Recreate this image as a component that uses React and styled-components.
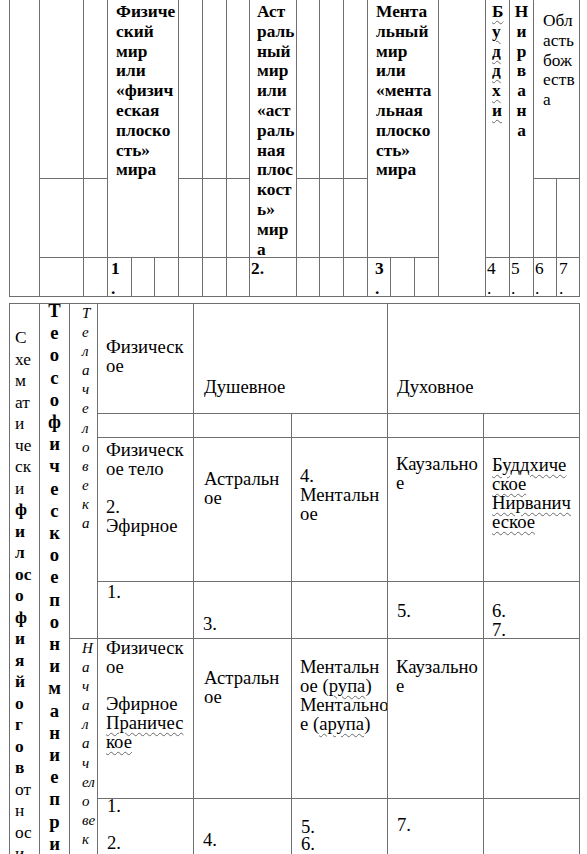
import styled, { createGlobalStyle } from "styled-components";

const GlobalStyle = createGlobalStyle`
  html, body {
    margin: 0;
    padding: 0;
    background: #fff;
  }
  body {
    font-family: "Liberation Serif", "DejaVu Serif", serif;
    color: #000;
  }
`;

const Page = styled.div`
  width: 587px;
  height: 854px;
  overflow: hidden;
  padding-left: 9px;
  box-sizing: border-box;
  font-family: "Liberation Serif", "DejaVu Serif", serif;
`;

const Grid = styled.div`
  display: grid;
  grid-template-columns: ${(p) => p.$cols};
  grid-template-rows: ${(p) => p.$rows};
  gap: 1px;
  padding: ${(p) => p.$pad};
  margin-top: ${(p) => p.$mt || 0}px;
  width: max-content;
  background: #6f6f6f;
`;

const Cell = styled.div`
  grid-column: ${(p) => p.$c};
  grid-row: ${(p) => p.$r};
  background: #fff;
  box-sizing: border-box;
  overflow: hidden;
  white-space: nowrap;
  padding: ${(p) => p.$pt || 0}px 0 0 ${(p) => (p.$pl === undefined ? 8 : p.$pl)}px;
  font-family: "Liberation Serif", "DejaVu Serif", serif;
  font-size: ${(p) => p.$fs || 18.67}px;
  line-height: ${(p) => p.$lh || 19}px;
  font-weight: ${(p) => (p.$bold ? 700 : 400)};
  font-style: ${(p) => (p.$italic ? "italic" : "normal")};
  text-align: ${(p) => (p.$center ? "center" : "left")};
`;

const HeadCell = styled(Cell).attrs({ $fs: 17.33, $lh: 19.8 })``;

const Stack = styled.div`
  margin-top: ${(p) => p.$shift || 0}px;
`;

const Wavy = styled.span`
  text-decoration: underline wavy #6a6a6a;
  text-decoration-thickness: 1px;
  text-underline-offset: 3px;
`;

const Strong = styled.span`
  font-weight: 700;
`;

function Lines({ items }) {
  return items.map((t, i) => (
    <span key={i}>
      {i > 0 && <br />}
      {t}
    </span>
  ));
}

const topCols =
  "29px 43px 23px 23px 22px 23px 23px 23px 22px 46px 22px 23px 23px 22px 23px 23px 46px 23px 23px 22px 22px";
const bottomCols = "29px 29px 27px 95px 97px 95px 95px 95px";

const emptyTop = [
  [2, 1], [3, 1], [7, 1], [8, 1], [9, 1], [11, 1], [12, 1], [13, 1],
  [2, 2], [3, 2], [7, 2], [8, 2], [9, 2], [11, 2], [12, 2], [13, 2], [20, 2], [21, 2],
  [2, 3], [3, 3], [5, 3], [6, 3], [7, 3], [8, 3], [9, 3], [11, 3], [12, 3], [13, 3], [15, 3], [16, 3],
];

const numbers = [
  { c: 4, t: ["1", "."], pl: 3, bold: true },
  { c: 10, t: ["2."], pl: 1, bold: true },
  { c: 14, t: ["3", "."], pl: 7, bold: true },
  { c: 18, t: ["4", "."], pl: 1 },
  { c: 19, t: ["5", "."], pl: 1 },
  { c: 20, t: ["6", "."], pl: 1 },
  { c: 21, t: ["7", "."], pl: 2 },
];

const schema = [
  "С", "хе", "м", "ат", "и", "че", "ск", "и",
  <Strong>ф</Strong>, <Strong>и</Strong>, <Strong>л</Strong>, <Strong>ос</Strong>,
  <Strong>о</Strong>, <Strong>ф</Strong>, <Strong>и</Strong>, <Strong>я</Strong>,
  <Strong>й</Strong>, <Strong>о</Strong>, <Strong>г</Strong>, <Strong>о</Strong>,
  <Strong>в</Strong>, "от", "н", "ос", "и",
];

const theosophy = "Теософическоепониманиепри".split("");

function TopTable() {
  return (
    <Grid $cols={topCols} $rows="178px 78px 38px" $pad="0 1px 1px 1px">
      <HeadCell $c="1" $r="1 / 4" />
      {emptyTop.map(([c, r]) => (
        <HeadCell key={`${c}-${r}`} $c={c} $r={r} />
      ))}
      <HeadCell $c="4 / 7" $r="1 / 3" $bold $pt={2} $pl={8}>
        <Lines items={["Физиче", "ский", "мир", "или", "«физич", "еская", "плоско", "сть»", "мира"]} />
      </HeadCell>
      <HeadCell $c="10" $r="1 / 3" $bold $pt={2} $pl={7}>
        <Lines items={["Аст", "раль", "ный", "мир", "или", "«аст", "раль", "ная", "плос", "кост", "ь»", "мир", "а"]} />
      </HeadCell>
      <HeadCell $c="14 / 17" $r="1 / 3" $bold $pt={2} $pl={8}>
        <Lines items={["Мента", "льный", "мир", "или", "«мента", "льная", "плоско", "сть»", "мира"]} />
      </HeadCell>
      <HeadCell $c="17" $r="1 / 4" />
      <HeadCell $c="18" $r="1 / 3" $bold $pt={2} $pl={6} $fs={13}>
        <Lines items={"Буддхи".split("").map((l) => <Wavy>{l}</Wavy>)} />
      </HeadCell>
      <HeadCell $c="19" $r="1 / 3" $bold $pt={2} $pl={0} $center>
        <Lines items={"Нирвана".split("")} />
      </HeadCell>
      <HeadCell $c="20 / 22" $r="1" $pt={11} $pl={9}>
        <Lines items={["Обл", "асть", "бож", "еств", "а"]} />
      </HeadCell>
      {numbers.map((n) => (
        <HeadCell key={n.c} $c={n.c} $r="3" $pt={1} $pl={n.pl} $bold={n.bold}>
          <Lines items={n.t} />
        </HeadCell>
      ))}
    </Grid>
  );
}

function BottomTable() {
  return (
    <Grid $cols={bottomCols} $rows="109px 23px 143px 56px 159px 120px" $pad="1px" $mt={6}>
      <Cell $c="1" $r="1 / 7" $fs={17.33} $lh={21.5} $pt={23} $pl={5}>
        <Lines items={schema} />
      </Cell>
      <Cell $c="2" $r="1 / 7" $bold $lh={22.2} $pl={0} $center>
        <Stack $shift={-4}>
          <Lines items={theosophy} />
        </Stack>
      </Cell>
      <Cell $c="3" $r="1 / 5" $italic $fs={15} $lh={19.1} $pl={12}>
        <Lines items={"Телачеловека".split("")} />
      </Cell>
      <Cell $c="3" $r="5 / 7" $italic $fs={15} $lh={19.1} $pl={12}>
        <Lines items={["Н", "а", "ч", "а", "л", "а", "ч", "ел", "о", "ве", "к", "а"]} />
      </Cell>

      <Cell $c="4" $r="1" $pt={33}>
        <Lines items={["Физическ", "ое"]} />
      </Cell>
      <Cell $c="5 / 7" $r="1" $pt={73} $pl={10}>
        Душевное
      </Cell>
      <Cell $c="7 / 9" $r="1" $pt={73} $pl={9}>
        Духовное
      </Cell>

      {[4, 5, 6, 7, 8].map((c) => (
        <Cell key={c} $c={c} $r="2" />
      ))}

      <Cell $c="4" $r="3" $pt={2}>
        <Lines items={["Физическ", "ое тело", "", "2.", "Эфирное"]} />
      </Cell>
      <Cell $c="5" $r="3" $pt={31} $pl={10}>
        <Lines items={["Астральн", "ое"]} />
      </Cell>
      <Cell $c="6" $r="3" $pt={28}>
        <Lines items={["4.", "Ментальн", "ое"]} />
      </Cell>
      <Cell $c="7" $r="3" $pt={16}>
        <Lines items={["Каузально", "е"]} />
      </Cell>
      <Cell $c="8" $r="3" $pt={17}>
        <Lines items={["Буддхиче", "ское", "Нирванич", "еское"].map((t) => <Wavy>{t}</Wavy>)} />
      </Cell>

      <Cell $c="4" $r="4" $pt={0} $pl={9}>
        1.
      </Cell>
      <Cell $c="5" $r="4" $pt={32} $pl={9}>
        3.
      </Cell>
      <Cell $c="6" $r="4" />
      <Cell $c="7" $r="4" $pt={19} $pl={9}>
        5.
      </Cell>
      <Cell $c="8" $r="4" $pt={19}>
        <Lines items={["6.", "7."]} />
      </Cell>

      <Cell $c="4" $r="5" $pt={0} $lh={18.7}>
        <Lines
          items={["Физическ", "ое", "", "Эфирное", <Wavy>Праничес</Wavy>, <Wavy>кое</Wavy>]}
        />
      </Cell>
      <Cell $c="5" $r="5" $pt={29} $pl={10}>
        <Lines items={["Астральн", "ое"]} />
      </Cell>
      <Cell $c="6" $r="5" $pt={18}>
        <Lines
          items={[
            "Ментальн",
            <>ое (<Wavy>рупа</Wavy>)</>,
            "Ментально",
            <>е (<Wavy>арупа</Wavy>)</>,
          ]}
        />
      </Cell>
      <Cell $c="7" $r="5" $pt={18}>
        <Lines items={["Каузально", "е"]} />
      </Cell>
      <Cell $c="8" $r="5" />

      <Cell $c="4" $r="6" $pt={0} $lh={18.6} $pl={9}>
        <Stack $shift={-2}>
          <Lines items={["1.", "", "2."]} />
        </Stack>
      </Cell>
      <Cell $c="5" $r="6" $pt={31} $pl={9}>
        4.
      </Cell>
      <Cell $c="6" $r="6" $pt={19} $lh={17} $pl={9}>
        <Lines items={["5.", "6."]} />
      </Cell>
      <Cell $c="7" $r="6" $pt={16} $pl={9}>
        7.
      </Cell>
      <Cell $c="8" $r="6" />
    </Grid>
  );
}

export default function App() {
  return (
    <Page>
      <GlobalStyle />
      <TopTable />
      <BottomTable />
    </Page>
  );
}
